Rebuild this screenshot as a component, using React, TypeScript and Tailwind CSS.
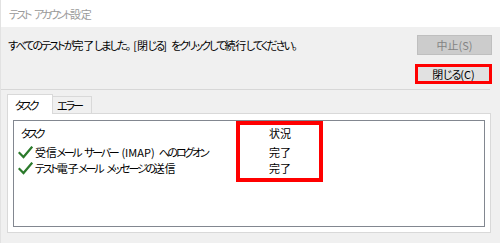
import React from "react";

const Check = () => (
  <svg width="15" height="13" viewBox="0 0 15 13" className="shrink-0">
    <path d="M1.5 7 L5.5 11 L13.5 1.5" fill="none" stroke="#2b7a2b" strokeWidth="2.2" strokeLinecap="square" />
  </svg>
);

const isKanji = (c: string) => /[\u4e00-\u9fff]/.test(c);
const isAscii = (c: string) => /[\x21-\x7e]/.test(c);

function J({ t, kana }: { t: string; kana: string }) {
  const runs = t.match(/[\u4e00-\u9fff]+|[\x21-\x7e]+|\s+|[^\u4e00-\u9fff\x21-\x7e\s]+/g) ?? [];
  return (
    <>
      {runs.map((r, i) =>
        /\s/.test(r) ? (
          <span key={i} className="inline-block w-[4px]" />
        ) : isKanji(r[0]) ? (
          <span key={i} className="tracking-[-0.3px]">{r}</span>
        ) : isAscii(r[0]) ? (
          <span key={i} className="tracking-normal">{r}</span>
        ) : (
          <span key={i} className={kana}>{r}</span>
        )
      )}
    </>
  );
}

export default function App() {
  return (
    <div className="w-[500px] h-[243px] bg-[#f0f0f0] flex flex-col text-[11px] leading-[16px] text-black font-['Noto_Sans_CJK_JP','Noto_Sans',sans-serif] [font-feature-settings:'palt'] whitespace-nowrap overflow-hidden border-l border-[#e2e2e2]">
      <div className="h-[27px] bg-white flex items-center pl-[8px] text-[#9a9a9a] shrink-0">
        <div><J t="テスト アカウント設定" kana="tracking-[-2.5px]" /></div>
      </div>
      <div className="flex items-start justify-between pl-[7px] pr-[8px] mt-[8px]">
        <div className="mt-[2px]"><J t="すべてのテストが完了しました。 [閉じる] をクリックして続行してください。" kana="tracking-[-1.9px]" /></div>
        <div className="w-[75px] h-[20px] bg-[#cccccc] border border-[#bfbfbf] flex items-center justify-center text-[#838383]">中止(S)</div>
      </div>
      <div className="flex justify-end pr-[8px] mt-[9px]">
        <div className="w-[77px] h-[20px] bg-[#e1e1e1] border-[3px] border-[#ff0000] flex items-center justify-center"><span><J t="閉じる(C)" kana="tracking-[-1px]" /></span></div>
      </div>
      <div className="h-px bg-[#d7d7d7] mr-[10px] mt-[5px]" />
      <div className="flex items-end ml-[6px] mt-[4px] h-[19px]">
        <div className="h-[20px] w-[46px] bg-white border-t border-l border-r border-[#d9d9d9] relative z-10 -mb-px pl-[7px] flex items-center tracking-[-2.5px]">タスク</div>
        <div className="h-[17px] w-[39px] bg-[#f0f0f0] border-t border-r border-[#d9d9d9] pl-[4px] flex items-center tracking-[-2px]">エラー</div>
      </div>
      <div className="ml-[6px] w-[484px] h-[120px] bg-white border border-[#d9d9d9] pt-[6px] px-[5px] pb-[5px]">
        <div className="relative h-full border border-[#828790] bg-white pt-[4px]">
          <div className="grid grid-cols-[230px_72px]">
            <div className="h-[16px] flex items-center pl-[7px] tracking-[-2.5px]">タスク</div>
            <div className="h-[16px] flex items-center justify-center">状況</div>
          </div>
          <div className="grid grid-cols-[230px_72px] mt-[3px]">
            <div className="h-[16px] flex items-center pl-[4px] gap-[2px]"><Check /><span><J t="受信メール サーバー (IMAP) へのログオン" kana="tracking-[-2.3px]" /></span></div>
            <div className="h-[16px] flex items-center justify-center">完了</div>
            <div className="h-[16px] flex items-center pl-[4px] gap-[2px]"><Check /><span><J t="テスト電子メール メッセージの送信" kana="tracking-[-2.2px]" /></span></div>
            <div className="h-[16px] flex items-center justify-center">完了</div>
          </div>
          <div className="absolute left-[222px] top-0 w-[87px] h-[61px] border-[4px] border-[#ff0000]" />
        </div>
      </div>
    </div>
  );
}
